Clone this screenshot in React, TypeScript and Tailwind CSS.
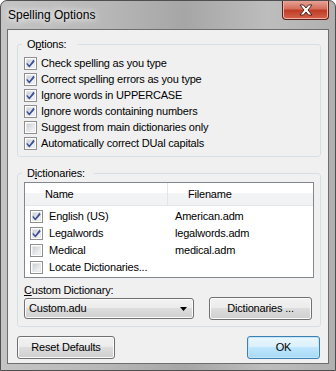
import React from "react";

const FONT = "font-['Liberation_Sans',Arial,sans-serif]";

function Check({ checked }: { checked?: boolean }) {
  return (
    <span className="w-[13px] h-[13px] shrink-0 border border-[#8e8f8f] bg-white p-px flex">
      <span className="relative flex-1 bg-[linear-gradient(135deg,#cbcfd5,#f7f7f7)] border border-[#e9e9e9]">
        {checked && (
          <svg viewBox="0 0 9 9" className="absolute -left-px -top-px w-[9px] h-[9px]">
            <path d="M0.8 3.6 L3.3 6.2 L7.6 0.6 L8.6 2.4 L3.4 8.6 L0.6 5.6 Z" fill="#3b4d92" />
          </svg>
        )}
      </span>
    </span>
  );
}

function Btn({ label, w, def }: { label: string; w: string; def?: boolean }) {
  return (
    <button
      className={`${w} h-[23px] rounded-[3px] border text-[11px] leading-none text-black flex items-center justify-center ${
        def
          ? "border-[#3c7fb1] bg-[linear-gradient(to_bottom,#eaf6fd_0%,#d9f0fc_50%,#bee6fd_50%,#a7d9f5_100%)] shadow-[inset_0_0_0_1px_#c4e6fa]"
          : "border-[#707070] bg-[linear-gradient(to_bottom,#f2f2f2_0%,#ebebeb_50%,#dddddd_50%,#cfcfcf_100%)] shadow-[inset_0_0_0_1px_#fbfbfb]"
      }`}
    >
      {label}
    </button>
  );
}

const options: [string, boolean][] = [
  ["Check spelling as you type", true],
  ["Correct spelling errors as you type", true],
  ["Ignore words in UPPERCASE", true],
  ["Ignore words containing numbers", true],
  ["Suggest from main dictionaries only", false],
  ["Automatically correct DUal capitals", true],
];

const dicts: [string, string, boolean][] = [
  ["English (US)", "American.adm", true],
  ["Legalwords", "legalwords.adm", true],
  ["Medical", "medical.adm", false],
  ["Locate Dictionaries...", "", false],
];

export default function App() {
  return (
    <div className={`${FONT} w-[336px] h-[371px] flex flex-col border border-[#4f4f4f] rounded-t-[7px] bg-[linear-gradient(to_right,#c4c4c4,#b8b8b8_30%,#a6a6a6_55%,#bdbdbd_80%,#b0b0b0)] overflow-hidden`}>
      {/* title bar */}
      <div className="h-[28px] shrink-0 flex items-start justify-between pl-[7px] pr-[6px]">
        <span className="mt-[7px] text-[12px] leading-[14px] text-black [text-shadow:0_0_6px_#fff,0_0_10px_#fff]">
          Spelling Options
        </span>
        <button className="-mt-px w-[47px] h-[20px] rounded-b-[4px] border border-[#5c1e16] border-t-0 bg-[linear-gradient(to_bottom,#e9a99b_0%,#d4705e_45%,#c03c26_55%,#d4634b_100%)] shadow-[inset_0_0_0_1px_#f1b3a6] flex items-center justify-center">
          <svg viewBox="0 0 14 12" className="w-[14px] h-[12px]">
            <path
              d="M1 1 H4.5 L7 4 L9.5 1 H13 L9 6 L13 11 H9.5 L7 8 L4.5 11 H1 L5 6 Z"
              fill="#fff"
              stroke="#3f1a14"
              strokeWidth="0.9"
              strokeLinejoin="round"
            />
          </svg>
        </button>
      </div>

      {/* client */}
      <div className="flex-1 mx-[6px] mb-[6px] border border-[#6e6e6e] bg-[#f0f0f0] flex flex-col text-[11px] tracking-[-0.2px] text-black">
        <fieldset className="mt-[8px] ml-[9px] w-[304px] border border-[#d5dfe5] rounded-[3px] pl-[6px] pt-[4px] pb-[5px]">
          <legend className="ml-[-2px] pl-[5px] pr-[12px] leading-[13px]">
            O<u>p</u>tions:
          </legend>
          {options.map(([t, c]) => (
            <div key={t} className="h-[16px] flex items-center gap-[4px]">
              <Check checked={c} />
              <span className="leading-[13px]">{t}</span>
            </div>
          ))}
        </fieldset>

        <fieldset className="mt-[10px] ml-[9px] w-[304px] border border-[#d5dfe5] rounded-[3px] pl-[6px] pt-[2px] pb-[6px]">
          <legend className="ml-[-2px] pl-[5px] pr-[9px] leading-[13px]">
            D<u>i</u>ctionaries:
          </legend>
          <div className="w-[290px] h-[96px] border border-[#828790] bg-white flex flex-col">
            <div className="h-[23px] shrink-0 flex bg-[linear-gradient(to_bottom,#ffffff_0%,#ffffff_45%,#f3f4f6_45%,#f1f2f4_100%)] border-b border-[#e3e5e8]">
              <div className="w-[143px] border-r border-[#e3e5e8] pl-[20px] flex items-center">Name</div>
              <div className="flex-1 pl-[20px] flex items-center">Filename</div>
            </div>
            <div className="pt-[2px]">
              {dicts.map(([n, f, c]) => (
                <div key={n} className="h-[17px] flex items-center">
                  <div className="w-[144px] pl-[5px] flex items-center gap-[6px]">
                    <Check checked={c} />
                    <span className="whitespace-nowrap">{n}</span>
                  </div>
                  <span className="pl-[6px]">{f}</span>
                </div>
              ))}
            </div>
          </div>
          <div className="mt-[6px] leading-[13px]">
            <u>C</u>ustom Dictionary:
          </div>
          <div className="mt-px flex items-start">
            <div className="w-[170px] h-[21px] rounded-[3px] border border-[#707070] bg-[linear-gradient(to_bottom,#f2f2f2_0%,#ebebeb_50%,#dddddd_50%,#cfcfcf_100%)] shadow-[inset_0_0_0_1px_#fbfbfb] flex items-center justify-between pl-[4px] pr-[6px]">
              <span>Custom.adu</span>
              <svg viewBox="0 0 7 4" className="w-[7px] h-[4px]">
                <path d="M0 0 H7 L3.5 4 Z" fill="#000" />
              </svg>
            </div>
            <div className="ml-[15px] -mt-px">
              <Btn label="Dictionaries ..." w="w-[103px]" />
            </div>
          </div>
        </fieldset>

        <div className="mt-[9px] ml-[9px] mr-[8px] flex justify-between">
          <Btn label="Reset Defaults" w="w-[98px]" />
          <Btn label="OK" w="w-[73px]" def />
        </div>
      </div>
    </div>
  );
}
